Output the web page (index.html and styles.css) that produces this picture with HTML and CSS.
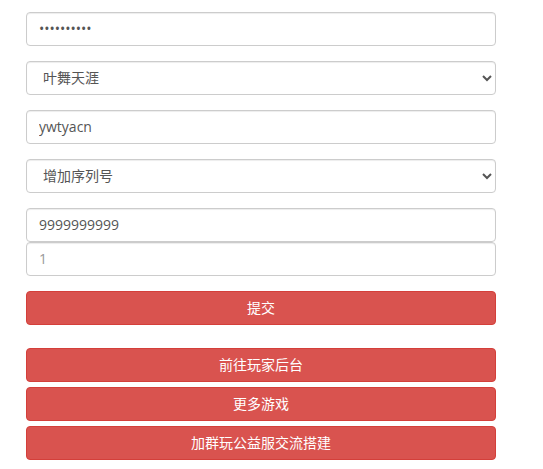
FILE: index.html
```html
<!DOCTYPE html>
<html lang="zh-CN">
<head>
    <meta charset="UTF-8">
    <meta name="viewport" content="width=device-width, initial-scale=1.0">
    <title>玩家后台</title>
    <link rel="stylesheet" href="styles.css">
</head>
<body>
    <div class="panel">
        <form class="gm-form" onsubmit="return false">
            <div class="form-group">
                <input type="password" class="form-control" value="1234567890">
            </div>
            <div class="form-group">
                <select class="form-control">
                    <option>叶舞天涯</option>
                </select>
            </div>
            <div class="form-group">
                <input type="text" class="form-control" value="ywtyacn">
            </div>
            <div class="form-group">
                <select class="form-control">
                    <option>增加序列号</option>
                </select>
            </div>
            <div class="form-group">
                <input type="text" class="form-control" value="9999999999">
                <input type="text" class="form-control" placeholder="1">
            </div>
            <button type="submit" class="btn btn-danger">提交</button>
        </form>

        <div class="links">
            <button class="btn btn-danger">前往玩家后台</button>
            <button class="btn btn-danger">更多游戏</button>
            <button class="btn btn-danger">加群玩公益服交流搭建</button>
        </div>
    </div>
</body>
</html>
```

FILE: styles.css
```css
body {
    margin: 0;
    background: #fff;
    font-family: "Open Sans", "Noto Sans CJK SC", sans-serif;
    font-size: 14px;
    color: #555;
}
.panel {
    width: 470px;
    margin-left: 26px;
    padding-top: 12px;
}
.form-group {
    margin-bottom: 15px;
}
.form-control {
    display: block;
    box-sizing: border-box;
    width: 100%;
    height: 34px;
    padding: 5px 12px 7px;
    font-family: inherit;
    font-size: 14px;
    color: #555;
    background: #fff;
    border: 1px solid #ccc;
    border-radius: 4px;
    box-shadow: inset 0 1px 1px rgba(0,0,0,0.075);
    margin: 0;
}
.form-control::placeholder {
    color: #999;
}
select.form-control {
    padding: 5px 8px 7px 12px;
}
.btn {
    display: block;
    box-sizing: border-box;
    width: 100%;
    height: 34px;
    padding: 5px 12px 7px;
    font-family: inherit;
    font-size: 14px;
    border-radius: 4px;
    cursor: pointer;
}
.btn-danger {
    color: #fff;
    background: #d9534f;
    border: 1px solid #d43f3a;
}
.btn-danger:hover {
    background: #c9302c;
}
.links {
    margin-top: 23px;
    display: flex;
    flex-direction: column;
    gap: 5px;
}
```
